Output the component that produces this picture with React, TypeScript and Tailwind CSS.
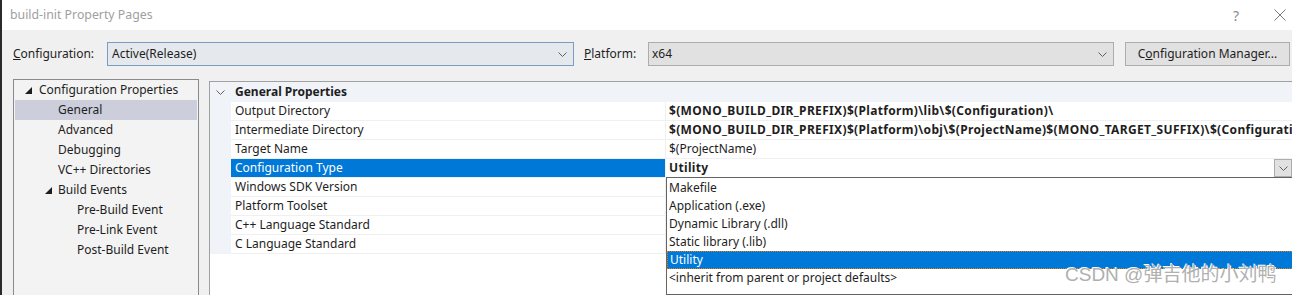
import React from 'react';

const FONT = { fontFamily: '"Noto Sans", "Noto Sans CJK SC", sans-serif' };

const Chevron = ({ className = '' }: { className?: string }) => (
  <svg width="9" height="5" viewBox="0 0 9 5" className={className}>
    <path d="M0.5 0.5 L4.5 4.5 L8.5 0.5" fill="none" stroke="#606060" strokeWidth="1" />
  </svg>
);

const treeItems = [
  { label: 'General', indent: 'pl-[43px]', selected: true },
  { label: 'Advanced', indent: 'pl-[43px]' },
  { label: 'Debugging', indent: 'pl-[43px]' },
  { label: 'VC++ Directories', indent: 'pl-[43px]' },
];

const buildEvents = ['Pre-Build Event', 'Pre-Link Event', 'Post-Build Event'];

const rows = [
  { name: 'Output Directory', value: '$(MONO_BUILD_DIR_PREFIX)$(Platform)\\lib\\$(Configuration)\\', bold: true },
  { name: 'Intermediate Directory', value: '$(MONO_BUILD_DIR_PREFIX)$(Platform)\\obj\\$(ProjectName)$(MONO_TARGET_SUFFIX)\\$(Configuration)\\', bold: true },
  { name: 'Target Name', value: '$(ProjectName)' },
  { name: 'Configuration Type', value: 'Utility', bold: true, selected: true },
  { name: 'Windows SDK Version', value: '' },
  { name: 'Platform Toolset', value: '' },
  { name: 'C++ Language Standard', value: '' },
  { name: 'C Language Standard', value: '' },
];

const options = [
  'Makefile',
  'Application (.exe)',
  'Dynamic Library (.dll)',
  'Static library (.lib)',
  'Utility',
  '<inherit from parent or project defaults>',
];

const Triangle = () => (
  <svg width="7" height="7" viewBox="0 0 7 7">
    <path d="M7 0 L7 7 L0 7 Z" fill="#1e1e1e" />
  </svg>
);

export default function App() {
  return (
    <div className="w-[1292px] h-[295px] overflow-hidden flex text-[12px] text-[#1e1e1e] bg-[#f0f0f0]" style={FONT}>
      <div className="w-[2px] shrink-0 bg-[#2a2a2a]" />
      <div className="flex-1 flex flex-col min-w-0">
        {/* title bar */}
        <div className="h-[30px] shrink-0 bg-white flex items-center pl-[8px] pr-[6px]">
          <span className="text-[12.3px] text-[#a0a0a0]">build-init Property Pages</span>
          <span className="ml-auto text-[14px] text-[#8a8a8a] mr-[35px]">?</span>
          <svg width="12" height="12" viewBox="0 0 12 12">
            <path d="M0.5 0.5 L11.5 11.5 M11.5 0.5 L0.5 11.5" stroke="#7a7a7a" strokeWidth="1" />
          </svg>
        </div>

        {/* configuration row */}
        <div className="flex items-center h-[24px] mt-[12px] pl-[11px] pr-[2px] shrink-0">
          <span className="w-[94px]"><span className="underline">C</span>onfiguration:</span>
          <div className="w-[467px] h-[24px] bg-[#e5e8ec] border border-[#7a9cc2] flex items-center pl-[4px] pr-[6px]">
            <span>Active(Release)</span>
            <Chevron className="ml-auto" />
          </div>
          <span className="ml-[10px] w-[64px]"><span className="underline">P</span>latform:</span>
          <div className="w-[466px] h-[24px] bg-[#e1e1e1] border border-[#adadad] flex items-center pl-[3px] pr-[6px]">
            <span>x64</span>
            <Chevron className="ml-auto" />
          </div>
          <div className="ml-[11px] w-[165px] h-[24px] bg-[#e1e1e1] border border-[#adadad] flex items-center justify-center">
            C<span className="underline">o</span>nfiguration Manager...
          </div>
        </div>

        {/* content */}
        <div className="flex flex-1 mt-[13px] pl-[11px] min-h-0">
          {/* tree */}
          <div className="w-[186px] shrink-0 bg-[#f3f3f3] border border-[#8a8a8a] border-b-0 pl-[1px] pr-[1px]">
            <div className="h-[20px] flex items-center pl-[10px] gap-[7px]">
              <Triangle />
              <span>Configuration Properties</span>
            </div>
            {treeItems.map((t) => (
              <div key={t.label} className={`h-[20px] flex items-center ${t.indent} ${t.selected ? 'bg-[#cccedb]' : ''}`}>
                {t.label}
              </div>
            ))}
            <div className="h-[20px] flex items-center pl-[30px] gap-[6px]">
              <Triangle />
              <span>Build Events</span>
            </div>
            {buildEvents.map((b) => (
              <div key={b} className="h-[20px] flex items-center pl-[62px]">{b}</div>
            ))}
          </div>

          {/* property grid */}
          <div className="relative flex-1 ml-[10px] mt-[2px] border-l border-t border-[#a0a0a0] bg-white min-w-0">
            <div className="flex">
              <div className="w-[21px] shrink-0 bg-[#f0f4f9] flex flex-col">
                <div className="h-[20px] flex items-center justify-center">
                  <Chevron />
                </div>
                <div className="h-[152px]" />
              </div>
              <div className="flex-1 min-w-0">
                <div className="h-[20px] bg-[#f0f4f9] flex items-center pl-[4px] font-bold">General Properties</div>
                {rows.map((r) => (
                  <div key={r.name} className="h-[19px] flex border-b border-[#f0f0f0]">
                    <div className={`w-[435px] shrink-0 flex items-center pl-[4px] border-r border-[#f0f0f0] ${r.selected ? 'bg-[#0078d7] text-white' : ''}`}>
                      {r.name}
                    </div>
                    <div className={`flex-1 flex items-center pl-[3px] whitespace-nowrap overflow-hidden ${r.bold ? 'font-bold tracking-[0.34px]' : ''}`}>
                      {r.value}
                      {r.selected && (
                        <div className="ml-auto w-[18px] h-[18px] bg-[#e1e1e1] border border-[#adadad] flex items-center justify-center">
                          <Chevron />
                        </div>
                      )}
                    </div>
                  </div>
                ))}
              </div>
            </div>

            {/* dropdown popup */}
            <div className="absolute left-[456px] top-[95px] w-[640px] h-[118px] bg-white border border-[#646464] pt-[1px]">
              {options.map((o) => (
                <div
                  key={o}
                  className={`h-[18px] flex items-center pl-[2px] mr-[1px] ${o === 'Utility' ? 'bg-[#0078d7] text-white border border-dotted border-[#e08000]' : ''}`}
                >
                  {o}
                </div>
              ))}
              <div
                className="absolute left-[398px] top-[83px] text-[19px] text-[#b0b0b0] whitespace-nowrap"
                style={{ fontFamily: '"Liberation Sans", "Noto Sans CJK SC", sans-serif', textShadow: '1px 1px 0 #ffffff, -1px -1px 0 #ffffff' }}
              >
                CSDN @弹吉他的小刘鸭
              </div>
            </div>
          </div>
        </div>
      </div>
    </div>
  );
}
